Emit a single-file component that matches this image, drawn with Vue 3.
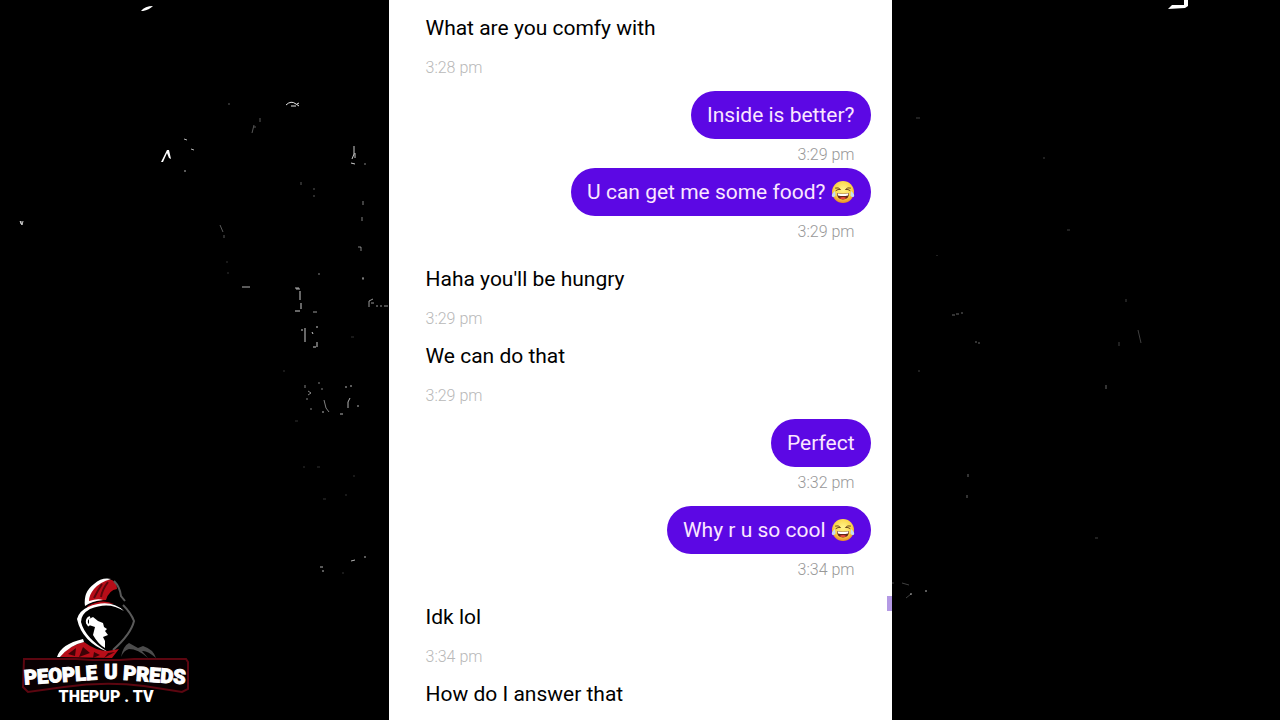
<template>
  <main class="stage">
    <svg class="specks" viewBox="0 0 1280 720" preserveAspectRatio="xMidYMid slice" aria-hidden="true">
      <path class="solid" d="M141 11 q4 -5 12 -5 q-4 4 -10 5z M1168 9 l4 -4 h12 v-5 h4 v6 l-3 2z M161 162 l6 -12 l2 0 l2 9 l-2 -1 l-2 -5 l-4 9z" />
      <path v-for="(mark, i) in marks" :key="i" class="mark" :d="mark.d" :stroke-opacity="mark.o" />
    </svg>

    <section class="chat">
      <article
        v-for="message in messages"
        :key="message.id"
        class="message"
        :class="[message.side, { spaced: message.spaced }]"
      >
        <p class="bubble">
          <span>{{ message.text }}</span>
          <svg v-if="message.laugh" class="emoji" viewBox="0 0 24 24" role="img" aria-label="laughing">
            <defs>
              <radialGradient :id="`face-${message.id}`" cx="50%" cy="38%" r="62%">
                <stop offset="0" stop-color="#fff48c" />
                <stop offset="0.65" stop-color="#fbd548" />
                <stop offset="1" stop-color="#e88a28" />
              </radialGradient>
            </defs>
            <circle cx="12" cy="12" r="11" :fill="`url(#face-${message.id})`" />
            <path d="M4.500 8 Q7.500 7 9.500 9.500 Q7 9 5 10.500 M19.500 8 Q16.500 7 14.500 9.500 Q17 9 19 10.500" fill="none" stroke="#6e4a1c" stroke-linecap="round" />
            <path d="M6 13 Q12 14.500 18 13 Q18 19.500 12 19.500 Q6 19.500 6 13z" fill="#642516" />
            <path d="M6.500 13.300 Q12 14.600 17.500 13.300 L17 15.500 Q12 16.500 7 15.500z" fill="#fff" />
            <path d="M8.500 18 Q12 16 15.500 18 Q12 20.500 8.500 18z" fill="#e8483c" />
            <path d="M4 11 Q0 14 1 16.500 Q3 18 4.500 15.500z M20 11 Q24 14 23 16.500 Q21 18 19.500 15.500z" fill="#c4dcf0" />
          </svg>
        </p>
        <time v-if="message.time">{{ message.time }}</time>
      </article>
      <span class="thumb"></span>
    </section>

    <svg class="logo" viewBox="0 0 190 140" role="img" aria-label="People U Preds, thepup.tv">
      <!-- hood -->
      <path d="M77 34 Q77 20 88 13 Q95 8 102 10 Q107 13 107 19 Q99 20 96 30 Q86 30 77 34z" fill="#b70d18" />
      <path d="M92 14 Q88 20 84 28 M98 12 Q92 20 91 27" fill="none" stroke="#5c060c" stroke-width="2" />
      <path d="M75 36 Q73 22 84 14 Q92 7 101 9 Q90 12 84 19 Q79 25 79 31 Q88 28 93 30 Q82 31 75 36z" fill="#fff" />
      <path d="M78 36 Q92 28 104 34 Q92 33 76 39z" fill="#b70d18" />
      <path d="M104 11 Q110 17 111 26 L115 31 M113 35 Q121 43 124 51 Q121 64 103 80" fill="none" stroke="#5a5a5a" stroke-width="2" />
      <path d="M114 41 Q99 31 80 39 Q71 44 71 52 Q75 68 98 82 Q72 72 67 49 Q69 41 78 37 Q100 28 114 41z" fill="#fff" />
      <!-- face -->
      <path d="M79 49 L83 47 L88 51 L93 53 L94 57 L97 59 L95 61 L98 65 L93 67 L95 71 L95 78 Q88 74 83 65 L85 57 L79 55z" fill="#fff" />
      <path d="M80 47 Q76 49 77 53 L79 56" fill="none" stroke="#fff" stroke-width="2" />
      <!-- shoulders -->
      <path d="M50 87 Q57 76 74 72 Q86 81 98 81 L109 79 L102 88z" fill="#b70d18" />
      <path d="M47 87 Q51 74 73 69 L74 72 Q60 75 50 87z" fill="#fff" />
      <path d="M58 84 L66 78 L65 86z M73 77 L69 87 L80 83z M84 82 L83 88 L90 85z M98 83 L94 88 L105 82z" fill="#3c0307" />
      <path d="M111 87 Q113 76 119 73 L128 78 L133 76 Q143 79 146 88 Q137 80 132 81 L138 88 Q128 79 119 79 Q114 80 111 87z" fill="#4c4c4c" />
      <path class="plate" d="M14 89 H66 L82 90 H110 L124 89 H176 L178 92 V119 L172 122 L134 116 Q95 111 54 117 L18 122 L13 117z" />
      <text class="name" x="51" y="112" transform="rotate(-4 51 112)">PEOPLE</text>
      <text class="name" x="101" y="109">U</text>
      <text class="name" x="144" y="112" transform="rotate(4 144 112)">PREDS</text>
      <text class="site" x="96" y="132">THEPUP . TV</text>
    </svg>
  </main>
</template>

<script setup>
const thread = [
  { side: 'received', text: 'What are you comfy with', time: '3:28 pm' },
  { side: 'sent', text: 'Inside is better?', time: '3:29 pm' },
  { side: 'sent', text: 'U can get me some food?', time: '3:29 pm', laugh: true },
  { side: 'received', text: "Haha you'll be hungry", time: '3:29 pm' },
  { side: 'received', text: 'We can do that', time: '3:29 pm' },
  { side: 'sent', text: 'Perfect', time: '3:32 pm' },
  { side: 'sent', text: 'Why r u so cool', time: '3:34 pm', laugh: true },
  { side: 'received', text: 'Idk lol', time: '3:34 pm' },
  { side: 'received', text: 'How do I answer that' }
]

// a new sender or a new minute opens a wider gap
const messages = thread.map((message, i) => {
  const prev = thread[i - 1]
  const spaced = !!prev && (prev.side !== message.side || (!!message.time && prev.time !== message.time))
  return { ...message, id: i, spaced }
})

const marks = [
  { o: 0.9, d: 'M286 105 q5 -5 10 -1 l3 2 M291 106 l5 0 M297 104 l2 -1' },
  { o: 0.8, d: 'M354 146 v8 l-2 5 M355 153 v5 M351 163 l4 1 M20 221 l2 4 l1 -4 M21 221 v3' },
  { o: 0.7, d: 'M184 139 l3 1 M191 149 l3 1 M185 170 v2 M242 287 h8 M295 288 h4 M296 289 h4' },
  { o: 0.35, d: 'M260 118 v4 M254 125 l-2 8 M256 127 l-2 0 M228 104 h2 M220 225 l3 7 M224 235 v3 M301 182 v3 M314 188 v2 M314 195 v2' },
  { o: 0.5, d: 'M363 201 v4 M362 217 v4 M358 247 h3 v4 M363 278 v2 M365 163 v2 M318 274 h2' },
  { o: 0.8, d: 'M300 291 v9 M301 303 v6 M295 311 h5 M302 329 v2 M305 328 v14 M317 342 v5 M313 347 h3 M312 332 l1 2 M316 327 h2' },
  { o: 0.6, d: 'M313 312 h4 M369 307 v-6 l4 -2 M371 303 h3 M377 305 v2 M380 306 h2 M384 306 h4 M362 278 h2' },
  { o: 0.5, d: 'M305 385 v3 M308 391 l3 2 l-3 2 M307 398 v2 M311 408 v2 M319 382 v2 M321 389 h2 M324 400 l2 8 l3 4' },
  { o: 0.7, d: 'M346 386 v2 M351 385 v2 M350 398 l-2 4 v6 M340 414 h3 M323 411 v2 M357 406 h2' },
  { o: 0.2, d: 'M227 261 v2 M227 273 h2 M283 371 h2 M295 421 h3 M304 466 v2 M317 467 h3 M323 499 h3 M346 494 v2 M353 476 h2 M342 573 h2 M351 337 h3' },
  { o: 0.7, d: 'M351 561 l4 -1 M365 556 v2 M320 567 h3 M323 570 v2' },
  { o: 0.25, d: 'M916 118 h4 M1044 157 v2 M1067 230 h3 M937 255 v1 M1126 299 v3 M1138 330 l3 13 M1119 342 v4 M918 371 h2' },
  { o: 0.4, d: 'M952 315 h3 M956 314 h3 M961 313 h2 M975 342 h2 M978 343 h2 M1106 385 v4 M968 474 v3 M967 495 v3' },
  { o: 0.25, d: 'M1095 538 h3 M893 582 v2 M902 583 l7 2 M906 598 l5 -4' },
  { o: 0.7, d: 'M911 593 v2 M925 591 h2' }
]
</script>

<style>
body {
  margin: 0;
  background: #000;
}
</style>

<style scoped>
.stage {
  position: relative;
  display: flex;
  justify-content: center;
  min-height: 100vh;
  background: #000;
  font-family: Roboto, "Liberation Sans", sans-serif;
  overflow: hidden;
}

.specks {
  position: absolute;
  inset: 0;
  width: 100%;
  height: 100%;
}

.solid {
  fill: #fff;
}

.mark {
  fill: none;
  stroke: #fff;
}

.chat {
  position: relative;
  box-sizing: border-box;
  width: 100%;
  max-width: 503px;
  padding: 4px 21px 0;
  background: #fff;
}

.message {
  display: flex;
  flex-direction: column;
  align-items: flex-start;
}

.message.spaced {
  margin-top: 10px;
}

.message.sent {
  align-items: flex-end;
}

.bubble {
  display: flex;
  align-items: center;
  gap: 5px;
  margin: 0;
  padding: 10px 16px;
  border-radius: 24px;
  font-size: 21px;
  line-height: 28px;
  color: #000;
}

.sent .bubble {
  background: #5c08e4;
  color: #fbe6ff;
}

.emoji {
  width: 24px;
  height: 24px;
}

time {
  padding: 6px 16px 3px;
  font-size: 16px;
  font-weight: 300;
  line-height: 20px;
  color: #b8b8b8;
}

.sent time {
  color: #989898;
}

.thumb {
  position: absolute;
  top: 596px;
  right: 0;
  width: 5px;
  height: 15px;
  background: #b49ae4;
}

.logo {
  position: absolute;
  left: 10px;
  bottom: 10px;
  width: 190px;
  height: 140px;
}

.plate {
  fill: #090002;
  stroke: #5c0610;
  stroke-width: 2;
}

.name,
.site {
  fill: #fff;
  text-anchor: middle;
  font-weight: 900;
}

.name {
  font-size: 20px;
  stroke: #fff;
}

.site {
  font-size: 16px;
}
</style>
